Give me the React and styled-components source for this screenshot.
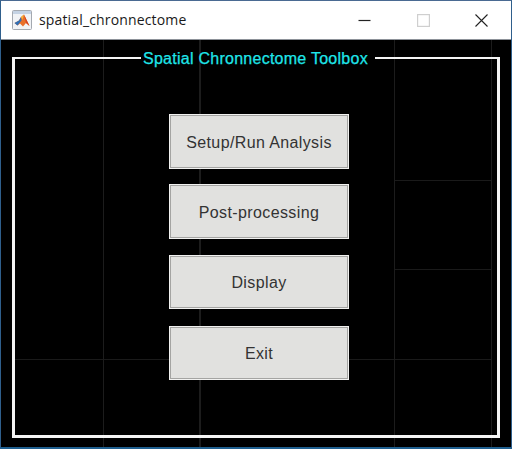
import React from "react";
import styled, { createGlobalStyle } from "styled-components";

const Global = createGlobalStyle`
  html, body { margin: 0; padding: 0; background: #000; }
  #root { width: 512px; height: 449px; overflow: hidden; }
`;

const Win = styled.div`
  box-sizing: border-box;
  width: 512px;
  height: 449px;
  display: flex;
  flex-direction: column;
  border: 1px solid #2f5f8c;
  border-top-color: #4a6a92;
  border-bottom: 2px solid #1f5f8f;
  background: #000;
`;

const TitleBar = styled.header`
  box-sizing: border-box;
  height: 39px;
  flex: none;
  display: flex;
  align-items: center;
  padding-left: 11px;
  background: #fff;
  border-bottom: 1px solid #8d9299;
`;

const AppIcon = styled.svg`
  width: 20px;
  height: 20px;
  flex: none;
`;

const TitleText = styled.span`
  margin-left: 7px;
  font: 400 14px/20px "Open Sans", "Noto Sans", sans-serif;
  letter-spacing: 0.15px;
  color: #1a1a1a;
  flex: 1;
`;

const WinButton = styled.button`
  width: 58.5px;
  height: 38px;
  flex: none;
  padding: 0;
  border: 0;
  background: transparent;
  display: flex;
  align-items: center;
  justify-content: center;
  svg { display: block; }
`;

const Canvas = styled.main`
  flex: 1;
  box-sizing: border-box;
  padding: 8px 10px 9px 11px;
  display: flex;
  background-color: #000;
  background-repeat: no-repeat;
  background-image:
    linear-gradient(#1c1c1c, #1c1c1c),
    linear-gradient(#1c1c1c, #1c1c1c),
    linear-gradient(#1c1c1c, #1c1c1c),
    linear-gradient(#1c1c1c, #1c1c1c),
    linear-gradient(#1a1a1a, #1a1a1a),
    linear-gradient(#1a1a1a, #1a1a1a),
    linear-gradient(#1a1a1a, #1a1a1a);
  background-size: 1px 100%, 2px 100%, 1px 100%, 1px 100%, 97px 1px, 97px 1px, 476px 1px;
  background-position: 102px 0, 198px 0, 393px 0, 490px 0, 393px 140px, 393px 229px, 14px 319px;
`;

const Panel = styled.fieldset`
  box-sizing: border-box;
  width: 488px;
  height: 390px;
  margin: 0;
  padding: 0;
  border: 3px solid #f4f4f4;
  border-top-width: 2px;
  min-width: 0;
`;

const Legend = styled.legend`
  margin: 0 0 0 126px;
  padding: 2px 7px 0 2px;
  font: 400 16px/18px "Liberation Sans", Arial, sans-serif;
  letter-spacing: 0.26px;
  color: #1fe6ea;
  -webkit-text-stroke: 0.25px #1fe6ea;
`;

const ButtonStack = styled.div`
  width: 180px;
  margin: 46px 0 0 154px;
  display: flex;
  flex-direction: column;
`;

const ActionButton = styled.button`
  box-sizing: border-box;
  display: block;
  margin: ${(p) => p.$gap}px 0 0;
  padding: 2px 0 0;
  width: 100%;
  height: ${(p) => p.$height}px;
  background: #e1e1df;
  border: 1px solid #f1f1f0;
  box-shadow: inset 0 0 0 1px #a4a4a2;
  font: 400 16px/20px "Liberation Sans", Arial, sans-serif;
  letter-spacing: 0.38px;
  color: #333;
`;

const buttons = [
  { label: "Setup/Run Analysis", gap: 0, height: 55 },
  { label: "Post-processing", gap: 15, height: 55 },
  { label: "Display", gap: 16, height: 54 },
  { label: "Exit", gap: 17, height: 54 },
];

export default function App() {
  return (
    <>
      <Global />
      <Win>
        <TitleBar>
          <AppIcon viewBox="0 0 20 20">
            <rect x="0.5" y="0.5" width="19" height="19" rx="1" fill="#f1f3f6" stroke="#a4a9b0" />
            <rect x="1" y="1" width="18" height="3" fill="#c5d3e4" />
            <path d="M2.5 13 L7 10.5 L9 7 L12 4.5 L17.5 16 L14 13 L11 16.5 L8 13.5 L5.5 15.5 Z" fill="#e8702a" />
            <path d="M2.5 13 L7 10.5 L9 7 L9.5 10.5 L5.5 15.5 Z" fill="#2f6fb5" />
            <path d="M12 4.5 L17.5 16 L14 13 Z" fill="#d8431f" />
            <path d="M9 7 L12 4.5 L10.5 10 Z" fill="#f4b23c" />
          </AppIcon>
          <TitleText>spatial_chronnectome</TitleText>
          <WinButton aria-label="Minimize">
            <svg width="13" height="13" viewBox="0 0 13 13"><path d="M0.5 6.5H12.5" stroke="#222" strokeWidth="1.2" /></svg>
          </WinButton>
          <WinButton aria-label="Maximize">
            <svg width="13" height="13" viewBox="0 0 13 13"><rect x="0.6" y="0.6" width="11.8" height="11.8" fill="none" stroke="#cfcfcf" strokeWidth="1.2" /></svg>
          </WinButton>
          <WinButton aria-label="Close">
            <svg width="13" height="13" viewBox="0 0 13 13"><path d="M0.5 0.5L12.5 12.5M12.5 0.5L0.5 12.5" stroke="#222" strokeWidth="1.1" /></svg>
          </WinButton>
        </TitleBar>
        <Canvas>
          <Panel>
            <Legend>Spatial Chronnectome Toolbox</Legend>
            <ButtonStack>
              {buttons.map((b) => (
                <ActionButton key={b.label} $gap={b.gap} $height={b.height}>{b.label}</ActionButton>
              ))}
            </ButtonStack>
          </Panel>
        </Canvas>
      </Win>
    </>
  );
}
